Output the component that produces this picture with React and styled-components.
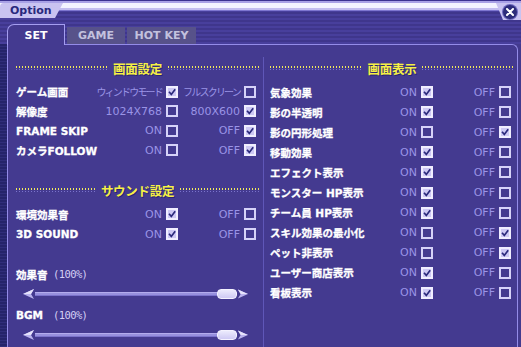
import React from 'react';
import styled, { createGlobalStyle } from 'styled-components';

const GlobalStyle = createGlobalStyle`
  html, body {
    margin: 0;
    padding: 0;
    background: #433a8e;
  }
  body {
    font-family: "DejaVu Sans", "Noto Sans CJK JP", sans-serif;
  }
`;

const screenRows = [
  { label: 'ゲーム画面', a: 'ウィンドウモード', b: 'フルスクリーン', on: 'a', kana: true },
  { label: '解像度', a: '1024X768', b: '800X600', on: 'b' },
  { label: 'FRAME SKIP', a: 'ON', b: 'OFF', on: 'b' },
  { label: 'カメラFOLLOW', a: 'ON', b: 'OFF', on: 'b' },
];

const soundRows = [
  { label: '環境効果音', a: 'ON', b: 'OFF', on: 'a' },
  { label: '3D SOUND', a: 'ON', b: 'OFF', on: 'a' },
];

const viewRows = [
  { label: '気象効果', on: 'a' },
  { label: '影の半透明', on: 'a' },
  { label: '影の円形処理', on: 'b' },
  { label: '移動効果', on: 'a' },
  { label: 'エフェクト表示', on: 'a' },
  { label: 'モンスター HP表示', on: 'a' },
  { label: 'チーム員 HP表示', on: 'a' },
  { label: 'スキル効果の最小化', on: 'b' },
  { label: 'ペット非表示', on: 'b' },
  { label: 'ユーザー商店表示', on: 'a' },
  { label: '看板表示', on: 'a' },
];

const CheckBox = ({ checked }) => (
  <Box $on={checked}>
    {checked && (
      <svg width="8" height="8" viewBox="0 0 8 8">
        <path d="M1 3.8 L3.3 6.4 L7.2 1.2" fill="none" stroke="#2b2a7c" strokeWidth="1.7" />
      </svg>
    )}
  </Box>
);

const OptionRow = ({ row, height }) => (
  <Row $h={height}>
    <Label>{row.label}</Label>
    <Choice $kana={row.kana}>
      {row.a || 'ON'}
      <CheckBox checked={row.on === 'a'} />
    </Choice>
    <Choice $kana={row.kana}>
      {row.b || 'OFF'}
      <CheckBox checked={row.on === 'b'} />
    </Choice>
  </Row>
);

const Arrow = ({ dir }) => (
  <svg width={dir === 'left' ? 12 : 11} height="10" viewBox="0 0 12 10">
    <g transform={dir === 'left' ? '' : 'translate(12 0) scale(-1 1)'}>
      <polygon points="0,5 11,0 8,5 11,10" fill="#b9b3ee" />
      <polygon points="0,5 11,0 8,5" fill="#e6e3fc" />
    </g>
  </svg>
);

const Slider = ({ value }) => (
  <SliderWrap>
    <Arrow dir="left" />
    <Track>
      <Thumb style={{ left: `calc(${value}% - ${(value / 100) * 20}px)` }} />
    </Track>
    <Arrow dir="right" />
  </SliderWrap>
);

const App = () => {
  return (
    <Window>
      <GlobalStyle />
      <Header>
        <TitleRow>
          <TitleTab>Option</TitleTab>
          <CloseArea>
            <CloseButton>
              <svg width="8" height="8" viewBox="0 0 8 8">
                <path d="M1 1 L7 7 M7 1 L1 7" stroke="#ffffff" strokeWidth="2" strokeLinecap="round" />
              </svg>
            </CloseButton>
          </CloseArea>
        </TitleRow>
        <TabRow>
          <Tab $active $w={58}>SET</Tab>
          <Tab $w={58}>GAME</Tab>
          <Tab $w={69}>HOT KEY</Tab>
        </TabRow>
      </Header>
      <Body>
        <SideStrip />
        <Panel>
          <LeftColumn>
            <SectionHead>
              <Dots />
              <HeadTitle>画面設定</HeadTitle>
              <Dots />
            </SectionHead>
            {screenRows.map((r) => (
              <OptionRow key={r.label} row={r} height={19.5} />
            ))}
            <SectionHead $top={21}>
              <Dots />
              <HeadTitle>サウンド設定</HeadTitle>
              <Dots />
            </SectionHead>
            {soundRows.map((r) => (
              <OptionRow key={r.label} row={r} height={20} />
            ))}
            <VolumeLabel $top={23}>
              <VolumeName>効果音</VolumeName>
              <Percent>(100%)</Percent>
            </VolumeLabel>
            <Slider value={100} />
            <VolumeLabel $top={8}>
              <VolumeName>BGM</VolumeName>
              <Percent>(100%)</Percent>
            </VolumeLabel>
            <Slider value={100} />
          </LeftColumn>
          <RightColumn>
            <SectionHead>
              <Dots />
              <HeadTitle>画面表示</HeadTitle>
              <Dots />
            </SectionHead>
            {viewRows.map((r) => (
              <OptionRow key={r.label} row={r} height={20.1} />
            ))}
          </RightColumn>
        </Panel>
      </Body>
    </Window>
  );
};

export default App;

// Styled Components

const Window = styled.div`
  width: 521px;
  height: 347px;
  display: flex;
  flex-direction: column;
  overflow: hidden;
  background: #433a8e;
`;

const Header = styled.div`
  height: 44px;
  flex-shrink: 0;
  display: flex;
  flex-direction: column;
  background:
    linear-gradient(to bottom, #3a3190 0 1px, #a9a1e6 1px 3px, #f3f3ff 3px 8px, #c3bdf0 8px 10px, #7d75d0 10px 11px, transparent 11px),
    repeating-linear-gradient(to bottom, #3f368c 0 2px, #483f9c 2px 4px);
`;

const TitleRow = styled.div`
  height: 22px;
  box-sizing: border-box;
  padding-top: 3px;
  display: flex;
  align-items: flex-start;
  justify-content: space-between;
`;

const TitleTab = styled.div`
  width: 63px;
  height: 15px;
  box-sizing: border-box;
  padding-left: 10px;
  background: #c9c3f1;
  border-top-left-radius: 4px;
  clip-path: polygon(0 0, 100% 0, 55px 100%, 0 100%);
  color: #29297d;
  font: bold 11px/15px "DejaVu Sans", sans-serif;
`;

const CloseArea = styled.div`
  width: 25px;
  height: 17px;
  box-sizing: border-box;
  padding-left: 7px;
  display: flex;
  align-items: center;
  background: #c9c3f1;
  clip-path: polygon(0 0, 100% 0, 100% 100%, 7px 100%);
`;

const CloseButton = styled.div`
  width: 14px;
  height: 14px;
  border-radius: 50%;
  background: #2d2c7a;
  box-shadow: 0 0 0 1px #6c67bd;
  display: flex;
  align-items: center;
  justify-content: center;
`;

const TabRow = styled.div`
  flex: 1;
  display: flex;
  align-items: flex-end;
  gap: 2px;
  padding-left: 7px;
  position: relative;
  z-index: 1;
`;

const Tab = styled.div`
  width: ${(p) => p.$w}px;
  height: ${(p) => (p.$active ? 21 : 17)}px;
  box-sizing: border-box;
  margin-bottom: ${(p) => (p.$active ? -1 : 0)}px;
  display: flex;
  align-items: center;
  justify-content: center;
  font: bold 11px "DejaVu Sans", sans-serif;
  color: ${(p) => (p.$active ? '#ffffff' : '#c3c1de')};
  background: ${(p) => (p.$active ? '#443a90' : '#57528a')};
  border: ${(p) => (p.$active ? '1px solid #a59ef0' : 'none')};
  border-bottom: none;
  border-top-left-radius: ${(p) => (p.$active ? 7 : 0)}px;
`;

const Body = styled.div`
  flex: 1;
  display: flex;
  min-height: 0;
`;

const SideStrip = styled.div`
  width: 7px;
  flex-shrink: 0;
  background: repeating-linear-gradient(to bottom, #25246a 0 2px, #302e7a 2px 3px);
`;

const Panel = styled.div`
  flex: 1;
  margin-right: 3px;
  border: 1px solid #948ce8;
  border-bottom: none;
  border-top-right-radius: 6px;
  background: #443a90;
  display: grid;
  grid-template-columns: 255px 1fr;
`;

const LeftColumn = styled.div`
  padding: 14px 7px 0 8px;
  display: flex;
  flex-direction: column;
`;

const RightColumn = styled.div`
  margin-top: 12px;
  padding: 2px 6px 0 6px;
  border-left: 1px solid #5f57b8;
  display: flex;
  flex-direction: column;
`;

const SectionHead = styled.div`
  height: 18px;
  margin: ${(p) => p.$top || 0}px -3px 5px 0;
  display: flex;
  align-items: center;
  gap: 6px;
`;

const Dots = styled.div`
  flex: 1;
  height: 4px;
  background:
    repeating-linear-gradient(90deg, #f2ea5a 0 1px, transparent 1px 3px) top / 100% 2px no-repeat,
    repeating-linear-gradient(90deg, #7a73cc 0 1px, transparent 1px 3px) bottom / 100% 1px no-repeat;
`;

const HeadTitle = styled.div`
  color: #f6f046;
  font: bold 12.5px "Noto Sans CJK JP", sans-serif;
  letter-spacing: -0.3px;
  text-shadow: 1px 1px 0 #2a2472;
  white-space: nowrap;
`;

const Row = styled.div`
  height: ${(p) => p.$h}px;
  display: grid;
  grid-template-columns: 1fr auto 78px;
  align-items: center;
`;

const Label = styled.span`
  color: #ffffff;
  font: bold 10.5px "DejaVu Sans", "Noto Sans CJK JP", sans-serif;
  -webkit-text-stroke: 0.3px #ffffff;
  white-space: nowrap;
`;

const Choice = styled.span`
  display: flex;
  align-items: center;
  justify-content: flex-end;
  gap: 4px;
  color: #9a94e6;
  font-family: "DejaVu Sans", "Noto Sans CJK JP", sans-serif;
  font-size: ${(p) => (p.$kana ? '10px' : '11px')};
  letter-spacing: ${(p) => (p.$kana ? '-1.8px' : '0')};
  white-space: nowrap;
`;

const Box = styled.span`
  width: 12px;
  height: 12px;
  box-sizing: border-box;
  flex-shrink: 0;
  margin-left: ${(p) => (p.$on ? 0 : 0)}px;
  border: 2px solid ${(p) => (p.$on ? '#f0eeff' : '#d6d2f8')};
  background: ${(p) => (p.$on ? '#cdc8f4' : 'transparent')};
  display: flex;
  align-items: center;
  justify-content: center;
`;

const VolumeLabel = styled.div`
  height: 14px;
  margin-top: ${(p) => p.$top}px;
  display: flex;
  align-items: center;
`;

const VolumeName = styled.span`
  width: 37px;
  color: #ffffff;
  font: bold 10.5px "DejaVu Sans", "Noto Sans CJK JP", sans-serif;
  -webkit-text-stroke: 0.3px #ffffff;
`;

const Percent = styled.span`
  color: #d4d0f4;
  font: 10.5px "DejaVu Sans Mono", monospace;
  letter-spacing: -0.6px;
`;

const SliderWrap = styled.div`
  width: 225px;
  height: 12px;
  margin: 7px 0 0 7px;
  display: flex;
  align-items: center;
`;

const Track = styled.div`
  flex: 1;
  height: 4px;
  position: relative;
  background: linear-gradient(to bottom, #b3acee 0 1px, #9790de 1px 3px, #7a72cc 3px);
`;

const Thumb = styled.div`
  position: absolute;
  top: -3px;
  width: 20px;
  height: 10px;
  box-sizing: border-box;
  border-radius: 4px;
  border: 1px solid #f4f2ff;
  background: linear-gradient(to bottom, #ecebfd, #cfcaf4);
`;
